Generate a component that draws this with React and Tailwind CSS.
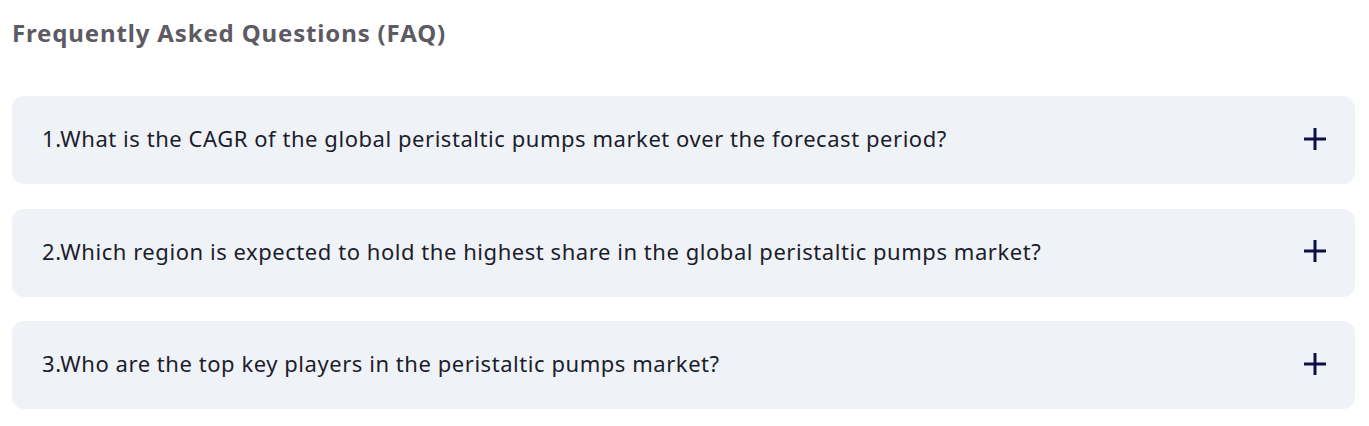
import React, { useState } from 'react';

const faqs = [
  '1.What is the CAGR of the global peristaltic pumps market over the forecast period?',
  '2.Which region is expected to hold the highest share in the global peristaltic pumps market?',
  '3.Who are the top key players in the peristaltic pumps market?',
];

const PlusIcon = () => (
  <svg width="22" height="22" viewBox="0 0 22 22" className="shrink-0">
    <rect x="0" y="9.5" width="22" height="3" fill="#0c1046" />
    <rect x="9.5" y="0" width="3" height="22" fill="#0c1046" />
  </svg>
);

const App = () => {
  const [open, setOpen] = useState(null);

  return (
    <div className="w-[1369px] h-[426px] bg-white px-3 pt-[17px]">
      {/* heading */}
      <h2
        className="text-[24px] font-bold text-[#5d5a64] leading-[32px] tracking-[0.85px]"
        style={{ fontFamily: '"Noto Sans", "DejaVu Sans", sans-serif' }}
      >
        Frequently Asked Questions (FAQ)
      </h2>

      {/* questions */}
      <div className="mt-[47px] flex flex-col gap-[24.5px] w-[1343px]">
        {faqs.map((q, i) => (
          <button
            key={i}
            onClick={() => setOpen(open === i ? null : i)}
            className="h-[88px] w-full flex items-center justify-between bg-[#eff2f7] rounded-xl pl-[30px] pr-[29px] pb-[3px] text-left"
          >
            <span
              className="text-[22px] text-[#1c1d2c] tracking-[0.55px]"
              style={{ fontFamily: '"Noto Sans", "DejaVu Sans", sans-serif' }}
            >
              {q}
            </span>
            <PlusIcon />
          </button>
        ))}
      </div>
    </div>
  );
};

export default App;
